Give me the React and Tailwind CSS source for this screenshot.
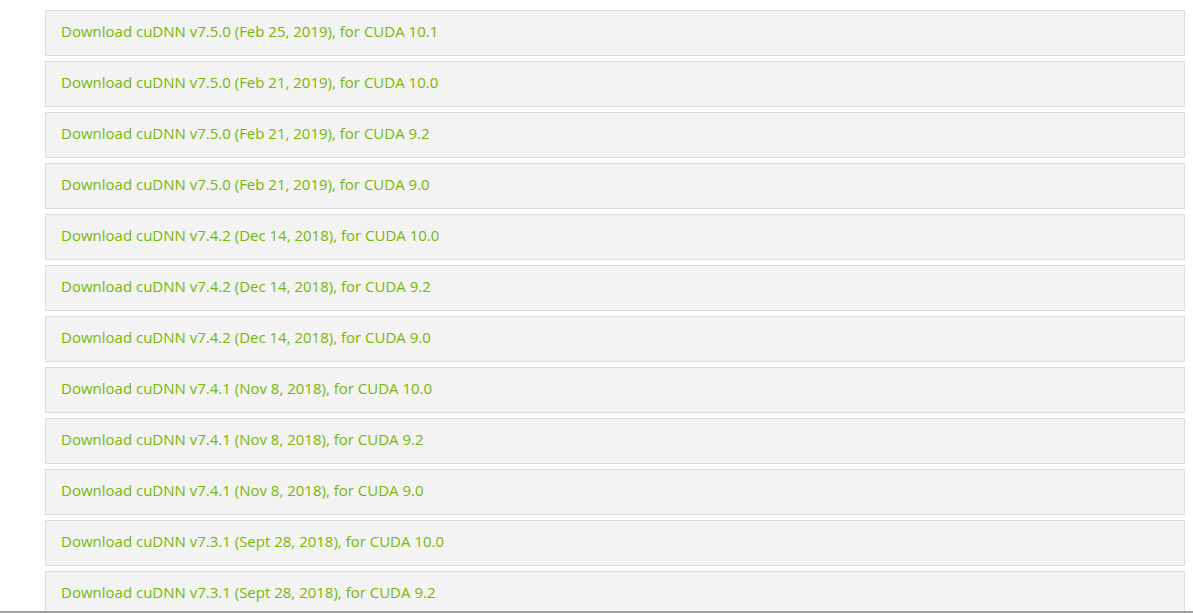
import React from 'react';

const rows = [
    'Download cuDNN v7.5.0 (Feb 25, 2019), for CUDA 10.1',
    'Download cuDNN v7.5.0 (Feb 21, 2019), for CUDA 10.0',
    'Download cuDNN v7.5.0 (Feb 21, 2019), for CUDA 9.2',
    'Download cuDNN v7.5.0 (Feb 21, 2019), for CUDA 9.0',
    'Download cuDNN v7.4.2 (Dec 14, 2018), for CUDA 10.0',
    'Download cuDNN v7.4.2 (Dec 14, 2018), for CUDA 9.2',
    'Download cuDNN v7.4.2 (Dec 14, 2018), for CUDA 9.0',
    'Download cuDNN v7.4.1 (Nov 8, 2018), for CUDA 10.0',
    'Download cuDNN v7.4.1 (Nov 8, 2018), for CUDA 9.2',
    'Download cuDNN v7.4.1 (Nov 8, 2018), for CUDA 9.0',
    'Download cuDNN v7.3.1 (Sept 28, 2018), for CUDA 10.0',
    'Download cuDNN v7.3.1 (Sept 28, 2018), for CUDA 9.2',
];

export default function App() {
    return (
        <div className="h-[613px] flex flex-col bg-white overflow-hidden" style={{ fontFamily: '"Open Sans", "Liberation Sans", sans-serif' }}>
            <div className="flex-1 min-h-0 overflow-hidden pl-[45px] pr-[8px] pt-[10px]">
                {rows.map((r, i) => (
                    <div key={i} className="h-[46px] mb-[5px] border border-[#dcdcdc] bg-[#f3f3f3] flex items-center px-[15px]">
                        <a href="#" className="text-[15px] text-[#76b900] leading-none -mt-[3px]">{r}</a>
                    </div>
                ))}
            </div>
            <div className="h-[2px] bg-[#a0a0a0] shrink-0" />
        </div>
    );
}
